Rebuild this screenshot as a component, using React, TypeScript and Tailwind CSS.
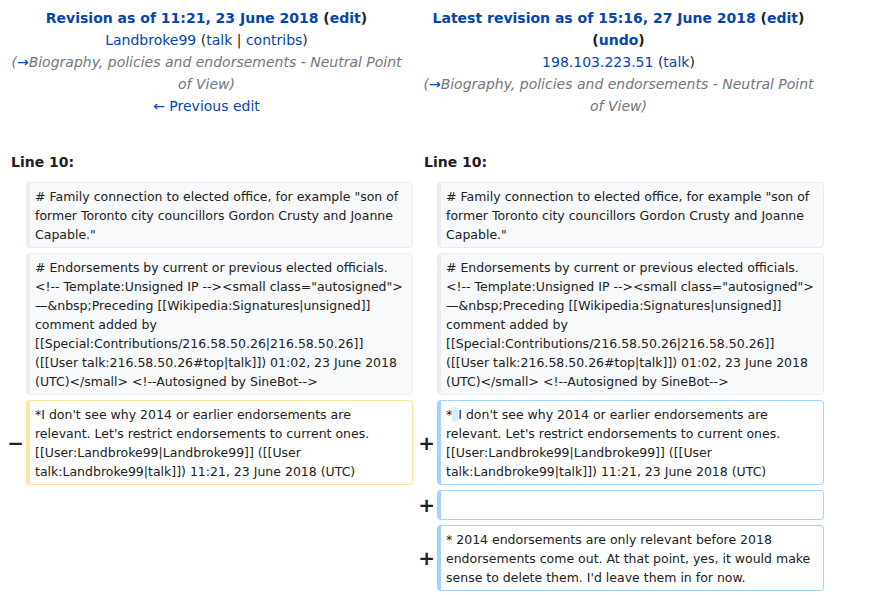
import * as React from "react";

const font = { fontFamily: '"DejaVu Sans", Verdana, sans-serif' };

function Link({ children }: { children: React.ReactNode }) {
  return <span className="text-[#0645ad]">{children}</span>;
}

function Summary() {
  return (
    <div className="px-[8px] italic text-[#72777d]">
      (<span className="text-[#0645ad] not-italic">→</span>Biography, policies and endorsements - Neutral Point of View)
    </div>
  );
}

function Box({
  kind,
  lines,
}: {
  kind: "context" | "del" | "add";
  lines: React.ReactNode[];
}) {
  const tone =
    kind === "context"
      ? "bg-[#f8f9fa] border-[#eaecf0]"
      : kind === "del"
      ? "bg-white border-[#ffe49c]"
      : "bg-white border-[#a3d3ff]";
  return (
    <div
      className={[
        "min-h-[29px] rounded-[4px] border border-l-4 pl-[5px] pr-[4px] py-[3.5px] text-[12.5px] leading-[19px] text-[#202122]",
        tone,
      ].join(" ")}
    >
      {lines.map((l, i) => (
        <div key={i} className="whitespace-nowrap">
          {l}
        </div>
      ))}
    </div>
  );
}

function Marker({ sign }: { sign?: string }) {
  return (
    <div className="flex items-center justify-end pr-[2px] text-[20px] font-bold text-[#202122]">
      {sign}
    </div>
  );
}

const family = [
  '# Family connection to elected office, for example "son of',
  "former Toronto city councillors Gordon Crusty and Joanne",
  'Capable."',
];

const endorse = [
  "# Endorsements by current or previous elected officials.",
  '<!-- Template:Unsigned IP --><small class="autosigned">',
  "—&nbsp;Preceding [[Wikipedia:Signatures|unsigned]]",
  "comment added by",
  "[[Special:Contributions/216.58.50.26|216.58.50.26]]",
  "([[User talk:216.58.50.26#top|talk]]) 01:02, 23 June 2018",
  "(UTC)</small> <!--Autosigned by SineBot-->",
];

const tail = [
  "relevant. Let's restrict endorsements to current ones.",
  "[[User:Landbroke99|Landbroke99]] ([[User",
  "talk:Landbroke99|talk]]) 11:21, 23 June 2018 (UTC)",
];

export default function App() {
  return (
    <div className="min-h-[595px] w-[874px] bg-white text-[#202122]" style={font}>
      <div className="grid grid-cols-[26px_387px_24px_387px] gap-y-[5px] pt-[7px]">
        <div className="col-span-2 text-center text-[14px] leading-[22px]">
          <div className="font-bold">
            <Link>Revision as of 11:21, 23 June 2018</Link> (<Link>edit</Link>)
          </div>
          <div>
            <Link>Landbroke99</Link> (<Link>talk</Link> | <Link>contribs</Link>)
          </div>
          <Summary />
          <div>
            <Link>← Previous edit</Link>
          </div>
        </div>
        <div className="col-span-2 text-center text-[14px] leading-[22px]">
          <div className="font-bold">
            <Link>Latest revision as of 15:16, 27 June 2018</Link> (<Link>edit</Link>)
          </div>
          <div className="font-bold">
            (<Link>undo</Link>)
          </div>
          <div>
            <Link>198.103.223.51</Link> (<Link>talk</Link>)
          </div>
          <Summary />
        </div>

        <div className="col-span-2 pl-[11px] pt-[29px] pb-[4px] text-[14px] font-bold leading-[22px]">Line 10:</div>
        <div className="col-span-2 pl-[11px] pt-[29px] pb-[4px] text-[14px] font-bold leading-[22px]">Line 10:</div>

        <Marker />
        <Box kind="context" lines={family} />
        <Marker />
        <Box kind="context" lines={family} />

        <Marker />
        <Box kind="context" lines={endorse} />
        <Marker />
        <Box kind="context" lines={endorse} />

        <Marker sign="−" />
        <Box kind="del" lines={["*I don't see why 2014 or earlier endorsements are", ...tail]} />
        <Marker sign="+" />
        <Box
          kind="add"
          lines={[
            <>
              *<span className="rounded-[2px] bg-[#d8ecff] px-[1px]"> </span>I don't see why 2014 or earlier
              endorsements are
            </>,
            ...tail,
          ]}
        />

        <div />
        <div />
        <Marker sign="+" />
        <Box kind="add" lines={[]} />

        <div />
        <div />
        <Marker sign="+" />
        <Box
          kind="add"
          lines={[
            "* 2014 endorsements are only relevant before 2018",
            "endorsements come out. At that point, yes, it would make",
            "sense to delete them. I'd leave them in for now.",
          ]}
        />
      </div>
    </div>
  );
}
